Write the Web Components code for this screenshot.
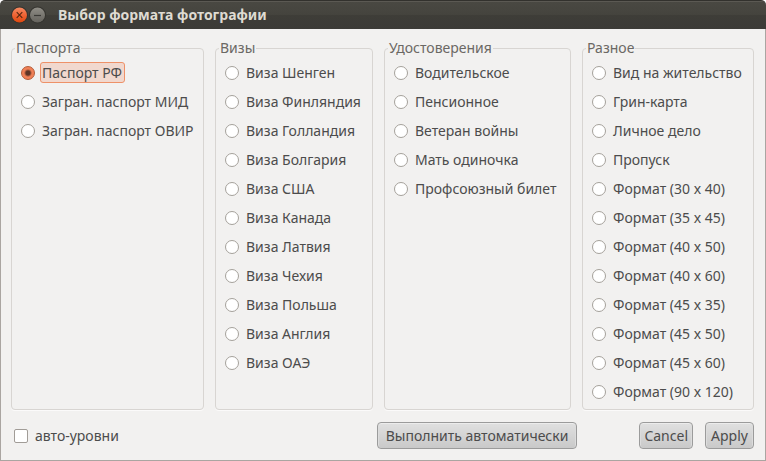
<!DOCTYPE html>
<html lang="ru">
<head>
<meta charset="utf-8">
<title>Выбор формата фотографии</title>
<style>
  html, body { margin: 0; background: #fff; }
  body { font: 14px/20px "Noto Sans", "Open Sans", sans-serif; color: #4c4c4c; }
</style>
</head>
<body>
<photo-dialog></photo-dialog>
<script>
class ShadowElement extends HTMLElement {
  constructor() {
    super();
    this.attachShadow({ mode: 'open' });
  }
  render(html) { this.shadowRoot.innerHTML = html; }
}

class TitleBar extends ShadowElement {
  connectedCallback() {
    this.render(`
      <style>
        :host { display: flex; align-items: center; box-sizing: border-box; height: 29px; padding: 0 11px;
          border-top: 1px solid #32312d; border-radius: 5px 5px 0 0; color: #dfdbd2;
          background: linear-gradient(#5b5953 0 1px, #494842 1px, #45443e 48%, #3e3d38 52%, #3c3b37); }
        button { width: 18px; height: 18px; padding: 0; border: 0; background: none; display: block; }
        svg { display: block; }
        h1 { font-size: 14px; line-height: 20px; font-weight: bold; margin: 0 0 0 11px; white-space: nowrap; }
      </style>
      <button type="button" aria-label="Закрыть">
        <svg width="18" height="18" viewBox="0 0 18 18">
          <defs><linearGradient id="o" x1="0" y1="0" x2="0" y2="1"><stop offset="0" stop-color="#f58a62"/><stop offset=".5" stop-color="#ef6435"/><stop offset="1" stop-color="#e0480f"/></linearGradient></defs>
          <circle cx="8.5" cy="9" r="8.5" fill="#35342f"/>
          <circle cx="8.5" cy="9" r="7.5" fill="url(#o)"/>
          <path d="M5.7 6.2l5.6 5.6m0-5.6l-5.6 5.6" stroke="#57260f" stroke-width="1.1"/>
        </svg>
      </button>
      <button type="button" aria-label="Свернуть">
        <svg width="18" height="18" viewBox="0 0 18 18">
          <defs><linearGradient id="g" x1="0" y1="0" x2="0" y2="1"><stop offset="0" stop-color="#8f8d86"/><stop offset="1" stop-color="#65635d"/></linearGradient></defs>
          <circle cx="8.5" cy="9" r="8.5" fill="#35342f"/>
          <circle cx="8.5" cy="9" r="7.5" fill="url(#g)"/>
          <path d="M5 9.5h7" stroke="#3b3a36" stroke-width="1.2"/>
        </svg>
      </button>
      <h1><slot></slot></h1>`);
  }
}
customElements.define('title-bar', TitleBar);

class OptionGroup extends ShadowElement {
  connectedCallback() {
    const options = this.getAttribute('options').split('|');
    const chosen = this.getAttribute('value');
    this.render(`
      <style>
        :host { display: flex; min-width: 0; }
        fieldset { flex: 1; min-width: 0; box-sizing: border-box; margin: 0; padding: 4px 4px 4px 9px;
          border: 1px solid #d8d5d2; border-radius: 4px; box-shadow: 0 1px #fbfafa; }
        legend { margin-left: -6px; padding: 0 1px; line-height: 20px; color: #6b6864; white-space: nowrap; }
        .list { display: flex; flex-direction: column; align-items: flex-start; gap: 8px; }
        label { display: flex; align-items: center; gap: 5px; height: 21px; white-space: nowrap; }
        input { appearance: none; box-sizing: border-box; width: 14px; height: 14px; margin: 0; flex: none;
          border: 1px solid #a5a19b; border-radius: 50%; background: #fff; outline: 0; }
        input:checked { border-color: #b35a36;
          background: radial-gradient(circle, #5e3426 0 2px, #5e3426 2px, #f07f55 4px, #f0825a); }
        span { box-sizing: border-box; height: 21px; line-height: 19px; padding: 0 2px 0 1px; border: 1px solid transparent; border-radius: 3px; }
        input:checked + span { background: #f1d8ce; border-color: #ee9168; }
      </style>
      <fieldset>
        <legend>${this.getAttribute('legend')}</legend>
        <div class="list">${options.map(o => `
          <label><input type="radio" name="format" value="${o}"${o === chosen ? ' checked' : ''}><span>${o}</span></label>`).join('')}
        </div>
      </fieldset>`);
    this.shadowRoot.addEventListener('change', () =>
      this.dispatchEvent(new CustomEvent('format-chosen', { bubbles: true })));
  }
  clear() {
    this.shadowRoot.querySelectorAll('input').forEach(i => { i.checked = false; });
  }
}
customElements.define('option-group', OptionGroup);

class CheckOption extends ShadowElement {
  connectedCallback() {
    this.render(`
      <style>
        :host { display: block; }
        label { display: flex; align-items: center; gap: 7px; white-space: nowrap; }
        input { appearance: none; box-sizing: border-box; width: 14px; height: 14px; margin: 0;
          border: 1px solid #a19c97; border-radius: 2px; background: #fff; }
        input:checked { background: #f0825a; }
      </style>
      <label><input type="checkbox"><span><slot></slot></span></label>`);
  }
}
customElements.define('check-option', CheckOption);

class PushButton extends ShadowElement {
  connectedCallback() {
    this.render(`
      <style>
        :host { display: block; }
        button { display: block; box-sizing: border-box; min-width: 49px; font: inherit; line-height: 19px; color: inherit;
          padding: 3px var(--button-pad, 4px); margin: 0;
          border: 1px solid #9b9b9b; border-radius: 4px; white-space: nowrap;
          background: linear-gradient(#e0e0e0, #c9c9c9);
          box-shadow: inset 0 1px #ececec, inset 1px 0 #dcdcdc, inset -1px 0 #dcdcdc; }
        button:active { background: #bdbdbd; }
      </style>
      <button type="button"><slot></slot></button>`);
  }
}
customElements.define('push-button', PushButton);

class PhotoDialog extends ShadowElement {
  connectedCallback() {
    this.render(`
      <style>
        :host { display: flex; flex-direction: column; min-height: 100vh; }
        main { flex: 1; display: flex; flex-direction: column; gap: 12px; padding: 9px 11px 11px 10px;
          background: #f2f1f0; border: 1px solid #aaa5a1; border-top: 0; }
        .groups { flex: 1; display: grid; gap: 11px; grid-template-columns: 193fr 158fr 187fr 172fr; }
        footer { display: flex; align-items: center; gap: 12px; padding-left: 3px; }
        .auto { margin-left: auto; margin-right: 50px; --button-pad: 8px; }
      </style>
      <title-bar>Выбор формата фотографии</title-bar>
      <main>
        <div class="groups">
          <option-group legend="Паспорта" value="Паспорт РФ" options="Паспорт РФ|Загран. паспорт МИД|Загран. паспорт ОВИР"></option-group>
          <option-group legend="Визы" options="Виза Шенген|Виза Финляндия|Виза Голландия|Виза Болгария|Виза США|Виза Канада|Виза Латвия|Виза Чехия|Виза Польша|Виза Англия|Виза ОАЭ"></option-group>
          <option-group legend="Удостоверения" options="Водительское|Пенсионное|Ветеран войны|Мать одиночка|Профсоюзный билет"></option-group>
          <option-group legend="Разное" options="Вид на жительство|Грин-карта|Личное дело|Пропуск|Формат (30 x 40)|Формат (35 x 45)|Формат (40 x 50)|Формат (40 x 60)|Формат (45 x 35)|Формат (45 x 50)|Формат (45 x 60)|Формат (90 x 120)"></option-group>
        </div>
        <footer>
          <check-option>авто-уровни</check-option>
          <push-button class="auto">Выполнить автоматически</push-button>
          <push-button>Cancel</push-button>
          <push-button>Apply</push-button>
        </footer>
      </main>`);
    const groups = [...this.shadowRoot.querySelectorAll('option-group')];
    this.shadowRoot.addEventListener('format-chosen', e =>
      groups.forEach(g => { if (g !== e.target) g.clear(); }));
  }
}
customElements.define('photo-dialog', PhotoDialog);
</script>
</body>
</html>
